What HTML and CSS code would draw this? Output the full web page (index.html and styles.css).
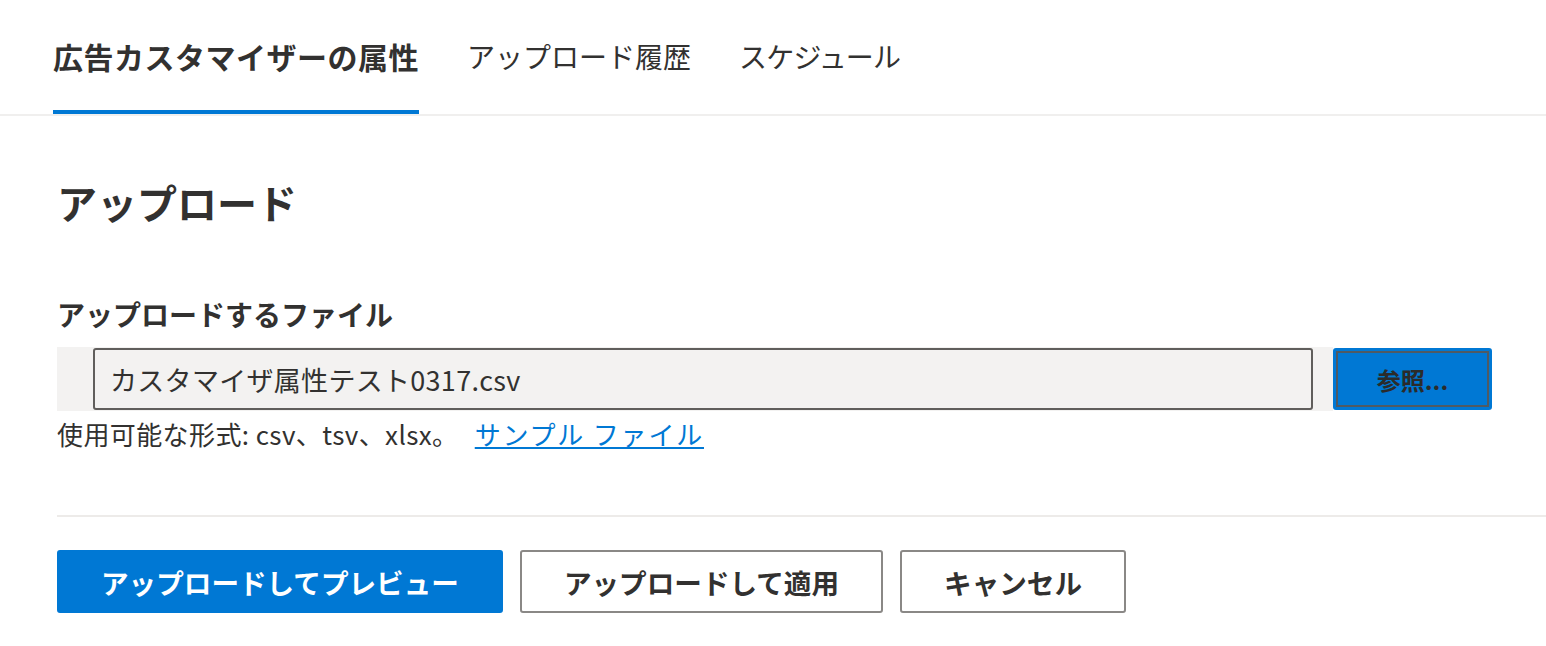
FILE: index.html
```html
<!DOCTYPE html>
<html lang="ja">
<head>
<meta charset="utf-8">
<link rel="stylesheet" href="styles.css">
</head>
<body>
<nav class="tabs">
  <div class="tab active">広告カスタマイザーの属性</div>
  <div class="tab">アップロード履歴</div>
  <div class="tab sched">スケジュール</div>
</nav>
<main class="panel">
  <h1 class="title">アップロード</h1>
  <div class="label">アップロードするファイル</div>
  <div class="field">
    <div class="band">
      <div class="input">カスタマイザ属性テスト0317.csv</div>
    </div>
    <button class="browse">参照...</button>
  </div>
  <div class="help">使用可能な形式: csv、tsv、xlsx。 <a class="link" href="#">サンプル ファイル</a></div>
  <div class="sep"></div>
  <div class="actions">
    <button class="btn primary">アップロードしてプレビュー</button>
    <button class="btn">アップロードして適用</button>
    <button class="btn">キャンセル</button>
  </div>
</main>
</body>
</html>
```

FILE: styles.css
```css
html, body {
  margin: 0;
  padding: 0;
  background: #ffffff;
  font-family: "Noto Sans CJK JP", "Noto Sans", sans-serif;
  color: #323130;
}

.tabs {
  display: flex;
  gap: 48px;
  padding-left: 53px;
  border-bottom: 2px solid #f0efee;
}

.tab {
  height: 114px;
  box-sizing: border-box;
  display: flex;
  align-items: center;
  padding-top: 2px;
  font-size: 28px;
  border-bottom: 4px solid transparent;
  color: #323130;
}

.tab.active {
  font-size: 30px;
  letter-spacing: 0.5px;
  font-weight: 700;
  border-bottom-color: #0078d4;
}

.tab.sched {
  letter-spacing: -0.8px;
}

.panel {
  padding: 63px 0 0 57px;
}

.title {
  margin: 0;
  font-size: 40px;
  line-height: 46px;
  font-weight: 700;
}

.label {
  margin-top: 71px;
  font-size: 28px;
  line-height: 36px;
  font-weight: 700;
}

.field {
  margin-top: 15px;
  display: flex;
  width: 1435px;
  height: 64px;
}

.band {
  flex: 1;
  background: #f3f2f1;
  padding: 1px 20px 1px 36px;
  display: flex;
}

.input {
  flex: 1;
  box-sizing: border-box;
  border: 2px solid #605e5c;
  border-radius: 3px;
  background: #f3f2f1;
  display: flex;
  align-items: center;
  padding-left: 15px;
  font-size: 27px;
  letter-spacing: 0.3px;
  color: #323130;
}

.browse {
  width: 159px;
  margin: 1px 0;
  background: #0078d4;
  border: 2px solid #0078d4;
  border-radius: 3px;
  box-shadow: inset 0 0 0 1px #0078d4, inset 0 0 0 3px #4f5a63;
  font-family: inherit;
  font-size: 24px;
  font-weight: 700;
  color: #2b2b2b;
  padding: 0;
}

.help {
  margin-top: 7px;
  font-size: 26px;
  line-height: 32px;
  letter-spacing: 0.4px;
}

.link {
  color: #0078d4;
  text-decoration: underline;
  margin-left: 10px;
  letter-spacing: 1.8px;
}

.sep {
  margin-top: 65px;
  height: 2px;
  background: #edebe9;
}

.actions {
  margin-top: 33px;
  display: flex;
  gap: 17px;
}

.btn {
  height: 63px;
  box-sizing: border-box;
  background: #ffffff;
  border: 2px solid #8a8886;
  border-radius: 3px;
  font-family: inherit;
  font-size: 27.6px;
  font-weight: 700;
  color: #323130;
  padding: 0 42px;
}

.btn.primary {
  background: #0078d4;
  border-color: #0078d4;
  color: #ffffff;
}
```
